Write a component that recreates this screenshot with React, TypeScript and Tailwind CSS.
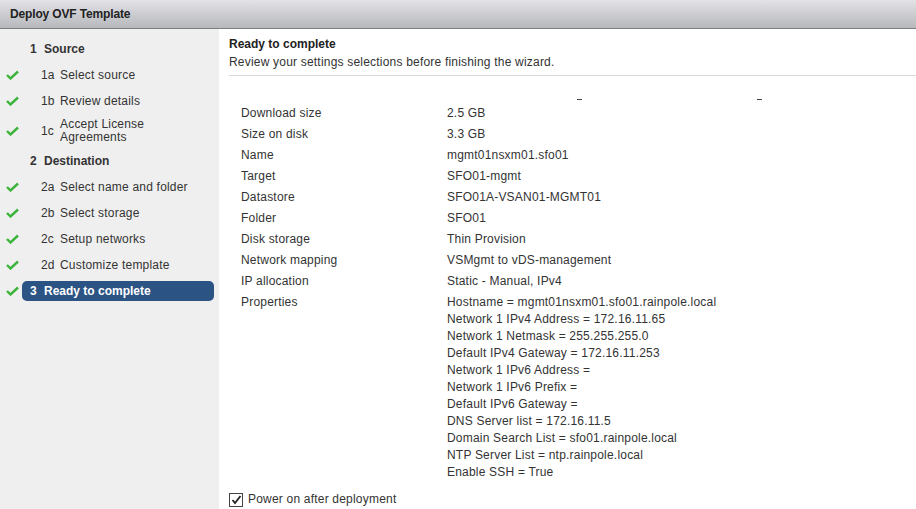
import React from "react";

const Check = () => (
  <svg width="13" height="10" viewBox="0 0 13 10" className="block">
    <path d="M1 5 L4.5 8.5 L12 1.5" fill="none" stroke="#3cb43c" strokeWidth="2.4" />
  </svg>
);

type Step = { num: string; label: React.ReactNode; sub?: boolean; done?: boolean; active?: boolean; tall?: boolean };

const steps: Step[] = [
  { num: "1", label: "Source" },
  { num: "1a", label: "Select source", sub: true, done: true },
  { num: "1b", label: "Review details", sub: true, done: true },
  { num: "1c", label: "Accept License Agreements", sub: true, done: true, tall: true },
  { num: "2", label: "Destination" },
  { num: "2a", label: "Select name and folder", sub: true, done: true },
  { num: "2b", label: "Select storage", sub: true, done: true },
  { num: "2c", label: "Setup networks", sub: true, done: true },
  { num: "2d", label: "Customize template", sub: true, done: true },
  { num: "3", label: "Ready to complete", done: true, active: true },
];

const rows: [string, string[]][] = [
  ["Download size", ["2.5 GB"]],
  ["Size on disk", ["3.3 GB"]],
  ["Name", ["mgmt01nsxm01.sfo01"]],
  ["Target", ["SFO01-mgmt"]],
  ["Datastore", ["SFO01A-VSAN01-MGMT01"]],
  ["Folder", ["SFO01"]],
  ["Disk storage", ["Thin Provision"]],
  ["Network mapping", ["VSMgmt to vDS-management"]],
  ["IP allocation", ["Static - Manual, IPv4"]],
  [
    "Properties",
    [
      "Hostname = mgmt01nsxm01.sfo01.rainpole.local",
      "Network 1 IPv4 Address = 172.16.11.65",
      "Network 1 Netmask = 255.255.255.0",
      "Default IPv4 Gateway = 172.16.11.253",
      "Network 1 IPv6 Address =",
      "Network 1 IPv6 Prefix =",
      "Default IPv6 Gateway =",
      "DNS Server list = 172.16.11.5",
      "Domain Search List = sfo01.rainpole.local",
      "NTP Server List = ntp.rainpole.local",
      "Enable SSH = True",
    ],
  ],
];

export default function App() {
  return (
    <div
      className="w-[916px] h-[509px] overflow-hidden flex flex-col bg-white text-[12px] text-[#333]"
      style={{ fontFamily: '"Liberation Sans", Arial, sans-serif' }}
    >
      <div className="h-[29px] shrink-0 flex items-center pl-[10px] border-b border-[#7f7f7f] bg-gradient-to-b from-[#e3e3e7] to-[#b7b8bc]">
        <span className="font-bold text-[12px] text-[#222] tracking-[-0.15px]">Deploy OVF Template</span>
      </div>
      <div className="flex flex-1 min-h-0 tracking-[0.2px]">
        <div className="w-[219px] shrink-0 bg-[#efefef] pt-[7px] pr-[5px]">
          {steps.map((s, i) => (
            <div key={i} className={`flex items-center ${s.tall ? "h-[34px]" : "h-[26px]"}`}>
              <div className="w-[22px] shrink-0 flex justify-center pl-[3px]">{s.done && <Check />}</div>
              <div
                className={`flex-1 flex items-center h-[20px] rounded-[5px] ${
                  s.active ? "bg-[#2b5383] text-white" : ""
                } ${s.sub ? "pl-[19px]" : "pl-[8px]"}`}
              >
                {s.sub ? (
                  <>
                    <span className="w-[19px] shrink-0">{s.num}</span>
                    <span className={s.tall ? "leading-[13px] w-[92px]" : ""}>{s.label}</span>
                  </>
                ) : (
                  <>
                    <span className="font-bold w-[14px] shrink-0">{s.num}</span>
                    <span className="font-bold tracking-normal">{s.label}</span>
                  </>
                )}
              </div>
            </div>
          ))}
        </div>
        <div className="flex-1 flex flex-col pl-[10px] pt-[7px]">
          <div className="leading-[17px] font-bold text-[#222] tracking-normal">Ready to complete</div>
          <div className="leading-[18px]">Review your settings selections before finishing the wizard.</div>
          <div className="mt-[4px] border-t border-[#dadada]" />
          <div className="h-[27px] flex items-end pb-[3px]">
            <span className="ml-[348px] w-[5px] h-[1px] bg-[#444]" />
            <span className="ml-[175px] w-[5px] h-[1px] bg-[#444]" />
          </div>
          <div className="pl-[12px]">
            {rows.map(([k, vals]) => (
              <div key={k} className="flex py-[2px] leading-[17px]">
                <div className="w-[206px] shrink-0">{k}</div>
                <div>
                  {vals.map((v) => (
                    <div key={v}>{v}</div>
                  ))}
                </div>
              </div>
            ))}
          </div>
          <div className="mt-[8px] flex items-center gap-[5px] leading-[17px]">
            <span className="w-[14px] h-[14px] border border-[#444] bg-white flex items-center justify-center">
              <svg width="11" height="10" viewBox="0 0 11 10">
                <path d="M1.5 5 L4 8 L9.5 1" fill="none" stroke="#222" strokeWidth="1.8" />
              </svg>
            </span>
            <span>Power on after deployment</span>
          </div>
        </div>
      </div>
    </div>
  );
}
